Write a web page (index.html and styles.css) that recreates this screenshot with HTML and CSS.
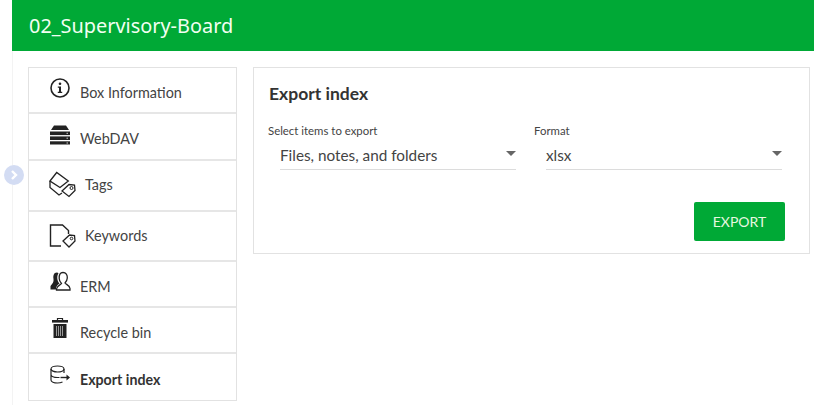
FILE: index.html

```html
<!DOCTYPE html>
<html lang="en">
<head>
  <meta charset="UTF-8">
  <title>02_Supervisory-Board</title>
  <link rel="stylesheet" href="styles.css">
</head>
<body>
  <div class="page">
    <div class="toggle">
      <svg width="12" height="12" viewBox="0 0 12 12"><path d="M4 2l4 4-4 4" fill="none" stroke="#fff" stroke-width="2.400"/></svg>
    </div>
    <header class="top-bar">02_Supervisory-Board</header>
    <div class="content">
      <!-- Side menu -->
      <nav class="side-menu">
        <a class="menu-item">
          <svg class="menu-icon" width="22" height="22" viewBox="0 0 22 22"><circle cx="11" cy="11" r="9" fill="none" stroke="#222" stroke-width="1.600"/><circle cx="11" cy="6.800" r="1.300" fill="#222"/><path d="M8.800 9.600h3.200v5.200h1.200v1.200H8.800v-1.200H10v-4H8.800z" fill="#222"/></svg>
          <span>Box Information</span>
        </a>
        <a class="menu-item item-high">
          <svg class="menu-icon" width="22" height="22" viewBox="0 0 22 22"><path d="M5 1.500h12l3 4.500H2z" fill="#222"/><rect x="1" y="7.500" width="20" height="3.600" fill="#222"/><rect x="1" y="12.400" width="20" height="3.600" fill="#222"/><rect x="1" y="17.300" width="20" height="3.200" fill="#222"/><path d="M17.500 9.300h1.500M17.500 14.200h1.500M17.500 19h1.500" stroke="#ccc" stroke-width="1"/></svg>
          <span>WebDAV</span>
        </a>
        <a class="menu-item item-tall">
          <svg class="menu-icon icon-wide" width="27" height="27" viewBox="0 0 27 27"><path d="M1 10 7.700 1.500 19.300 10 11 16.500z" fill="none" stroke="#222" stroke-width="1.300"/><path d="M1 10v6.500L10 24l3-2M11 16.500" fill="none" stroke="#222" stroke-width="1.300"/><path d="M13 20l7-6.500 5.500.5.500 5.500-6 6z" fill="#fff" stroke="#222" stroke-width="1.300"/><circle cx="22.500" cy="17" r="1.500" fill="none" stroke="#222" stroke-width="1"/></svg>
          <span>Tags</span>
        </a>
        <a class="menu-item item-tall">
          <svg class="menu-icon icon-wide" width="27" height="27" viewBox="0 0 27 27"><path d="M12 24H1.500V3h12l6 5.500V12" fill="none" stroke="#222" stroke-width="1.400"/><path d="M14 19l6.500-6 5 .5.500 5.500-6 6z" fill="#fff" stroke="#222" stroke-width="1.300"/><circle cx="22.500" cy="16.500" r="1.300" fill="none" stroke="#222" stroke-width="1"/></svg>
          <span>Keywords</span>
        </a>
        <a class="menu-item">
          <svg class="menu-icon" width="22" height="22" viewBox="0 0 22 22"><path d="M8 1.500C4.500 1.500 4 5 4.500 8 5 11 3.500 12.500 1.500 15v3.500h5.500c0-3 1.500-5 3.500-6C8 10 7.500 5 9.500 2.500 9 2 8.500 1.500 8 1.500z" fill="#222"/><path d="M14 1.500c3 0 4.500 2.500 4.300 5.500-.2 2.500-1.300 4-2.300 5 1 1.500 4.500 2 5 5.500v1.500H7.500V18c.5-3.500 4-4 5-5.500-1-1-2.200-2.500-2.300-5C10 4 11 1.500 14 1.500z" fill="#fff" stroke="#222" stroke-width="1.300"/></svg>
          <span>ERM</span>
        </a>
        <a class="menu-item">
          <svg class="menu-icon" width="22" height="22" viewBox="0 0 22 22"><path d="M8.500 3V1.500h5V3" fill="none" stroke="#222" stroke-width="1.200"/><rect x="3" y="3" width="16" height="2.600" fill="#222"/><path d="M4.500 7h13v14h-13z" fill="#222"/><path d="M7.500 9v10M9.500 9v10M11.500 9v10M13.500 9v10" stroke="#999" stroke-width="1"/></svg>
          <span>Recycle bin</span>
        </a>
        <a class="menu-item item-active">
          <svg class="menu-icon" width="22" height="22" viewBox="0 0 22 22"><ellipse cx="8.500" cy="5" rx="6.500" ry="3" fill="none" stroke="#222" stroke-width="1.200"/><path d="M2 5v11c0 1.700 3 3 6.500 3 2 0 3.500-.3 5-1M2 10.500c0 1.700 3 3 6.500 3h2M15 5v4" fill="none" stroke="#222" stroke-width="1.200"/><path d="M11.500 13.500h7" stroke="#222" stroke-width="1.400"/><path d="M17.500 10.500l3.500 3-3.500 3z" fill="#222"/></svg>
          <span>Export index</span>
        </a>
      </nav>

      <!-- Export panel -->
      <section class="panel">
        <h2>Export index</h2>
        <div class="field-row">
          <div class="field">
            <label>Select items to export</label>
            <div class="select-box">Files, notes, and folders<i class="caret"></i></div>
          </div>
          <div class="field">
            <label>Format</label>
            <div class="select-box">xlsx<i class="caret"></i></div>
          </div>
        </div>
        <div class="actions">
          <button class="export-btn" type="button">EXPORT</button>
        </div>
      </section>
    </div>
  </div>
</body>
</html>
```

FILE: styles.css

```css
body {
  margin: 0;
  background-color: #fff;
  font-family: 'Lato', sans-serif;
  color: #333;
}

.page {
  position: relative;
  width: 814px;
  height: 405px;
  overflow: hidden;
  padding-left: 12px;
  box-sizing: border-box;
}

.toggle {
  position: absolute;
  left: 4px;
  top: 165px;
  width: 20px;
  height: 20px;
  border-radius: 50%;
  background-color: #d3dcf3;
  display: flex;
  align-items: center;
  justify-content: center;
}

.top-bar {
  height: 51px;
  background-color: #00a936;
  color: #f2fff2;
  font-size: 19.9px;
  line-height: 52px;
  padding-left: 17px;
  font-family: 'Noto Sans', sans-serif;
}

.content {
  display: flex;
  align-items: flex-start;
  gap: 16px;
  height: 354px;
  padding: 16px 4px 0 15px;
  box-sizing: border-box;
  border-left: 1px solid #f3f3f3;
}

.side-menu {
  width: 209px;
  flex-shrink: 0;
  border: 1px solid #e2e2e2;
  box-sizing: border-box;
}

.menu-item {
  display: flex;
  align-items: center;
  height: 46px;
  padding-left: 20px;
  padding-top: 4px;
  border-bottom: 2px solid #e6e6e6;
  box-sizing: border-box;
  font-size: 14.4px;
  color: #444;
}

.menu-item:last-child {
  border-bottom: none;
}

.item-high {
  height: 47px;
}

.item-tall {
  height: 50.5px;
  padding-top: 0;
  padding-bottom: 1px;
}

.menu-icon {
  flex-shrink: 0;
  margin-right: 9px;
  margin-top: -8px;
}

.icon-wide {
  margin-right: 9px;
  margin-top: 0;
}

.item-active {
  font-weight: bold;
  font-size: 14.2px;
  color: #333;
}

.panel {
  flex: 1;
  height: 187px;
  border: 1px solid #e2e2e2;
  box-sizing: border-box;
  padding: 15px 27px 0 14px;
}

h2 {
  margin: 0 0 0 1px;
  font-size: 17.5px;
  line-height: 21px;
  font-weight: bold;
  color: #333;
}

.field-row {
  display: flex;
  gap: 18px;
  margin-top: 20px;
}

.field {
  flex: 1;
}

label {
  display: block;
  font-size: 11.4px;
  line-height: 14px;
  color: #444;
}

.select-box {
  position: relative;
  margin: 6px 0 0 12px;
  height: 25px;
  line-height: 22px;
  font-size: 15.3px;
  color: #444;
  border-bottom: 1px solid #dcdcdc;
}

.caret {
  position: absolute;
  right: 0;
  top: 7px;
  border-left: 5px solid transparent;
  border-right: 5px solid transparent;
  border-top: 5px solid #666;
}

.actions {
  display: flex;
  justify-content: flex-end;
  margin-top: 32px;
  margin-right: -3px;
}

.export-btn {
  width: 91px;
  height: 39px;
  border: none;
  border-radius: 2px;
  background-color: #00a936;
  color: #e8f8e0;
  font-family: 'Lato', sans-serif;
  font-size: 14px;
}
```
